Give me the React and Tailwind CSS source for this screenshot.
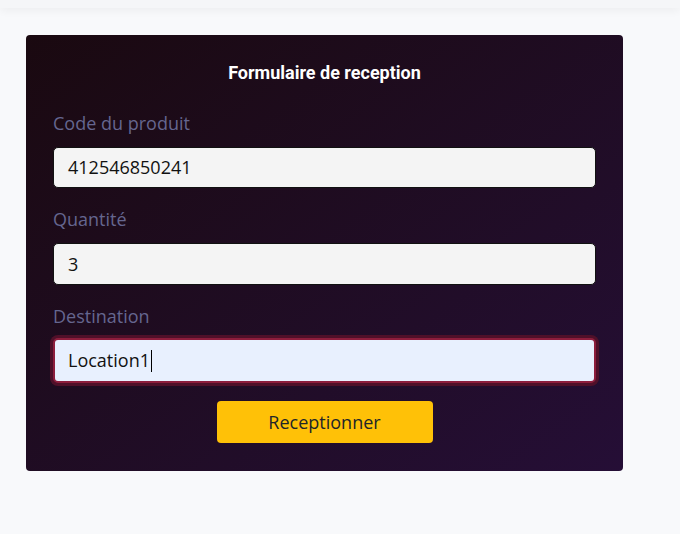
import React from 'react';

const Field = ({ label, value, focused, mt, h }) => (
  <div className={mt}>
    <label className="block text-[18px] leading-[27px] text-[#65668f]">{label}</label>
    <div
      className={`flex items-center rounded-[5px] text-[18px] text-[#111] ${h} ${
        focused
          ? 'mt-[8px] border-2 border-[#8c1d3c] bg-[#e8f0fe] px-[13px] ring-[3px] ring-[#4f1029]'
          : 'mt-[10px] border border-[#111] bg-[#f4f4f4] px-[14px]'
      }`}
    >
      {value}
      {focused && <span className="ml-[1px] inline-block h-[22px] w-[1px] bg-black" />}
    </div>
  </div>
);

export default function App() {
  return (
    <div className="min-h-[534px] bg-[#f8f9fb] font-['Open_Sans',sans-serif]">
      <div className="h-2 bg-[#f5f6f8] shadow-[0_2px_10px_rgba(0,0,0,0.06)]" />
      <div className="pl-[26px] pt-[27px]">
        <div className="w-[597px] rounded-[4px] bg-gradient-to-br from-[#1a0910] to-[#250e36] px-[27px] pb-[28px] pt-[24px]">
          <h1 className="text-center font-['Roboto',sans-serif] text-[18px] font-bold leading-[27px] text-white">
            Formulaire de reception
          </h1>
          <Field label="Code du produit" value="412546850241" mt="mt-[24px]" h="h-[41px]" />
          <Field label="Quantité" value="3" mt="mt-[18px]" h="h-[42px]" />
          <Field label="Destination" value="Location1" focused mt="mt-[18px]" h="h-[45px]" />
          <div className="mt-[18px] flex justify-center">
            <button className="h-[42px] w-[216px] rounded-[4px] bg-[#ffc107] text-[18px] text-[#212529]">
              Receptionner
            </button>
          </div>
        </div>
      </div>
    </div>
  );
}
